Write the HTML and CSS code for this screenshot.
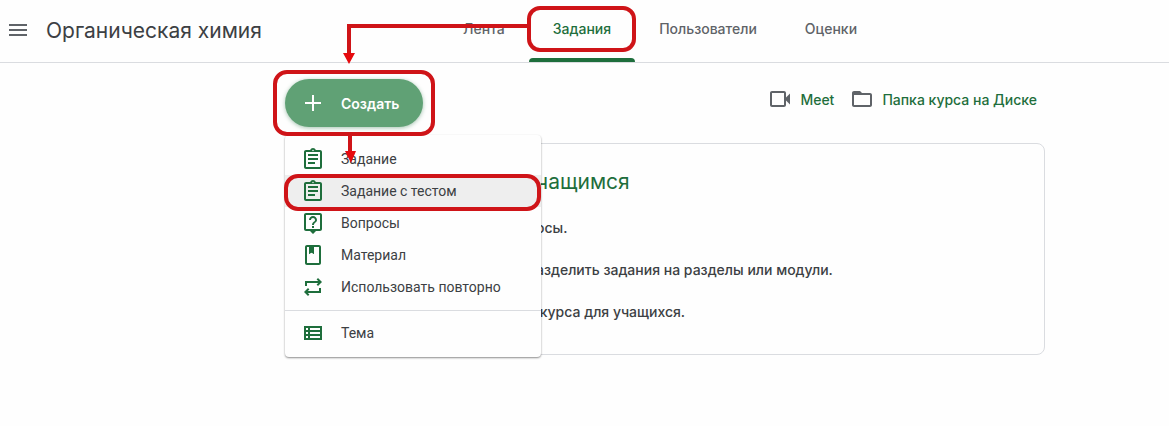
FILE: index.html
```html
<!DOCTYPE html>
<html lang="ru">
<head>
    <meta charset="UTF-8">
    <meta name="viewport" content="width=device-width, initial-scale=1.0">
    <title>Органическая химия</title>
    <link rel="stylesheet" href="styles.css">
</head>
<body>
    <header class="header">
        <div class="brand">
            <button class="burger" type="button" aria-label="Меню">
                <svg class="icon" viewBox="0 0 24 24"><path d="M3 18h18v-2H3v2zm0-5h18v-2H3v2zm0-7v2h18V6H3z"/></svg>
            </button>
            <h1 class="title">Органическая химия</h1>
        </div>
        <nav class="tabs">
            <a class="tab" href="#">Лента</a>
            <a class="tab active" href="#">Задания</a>
            <a class="tab" href="#">Пользователи</a>
            <a class="tab" href="#">Оценки</a>
        </nav>
    </header>

    <main class="content">
        <div class="toolbar">
            <div class="create">
                <button class="create-button" type="button">
                    <svg class="icon" viewBox="0 0 24 24"><path d="M20 13h-7v7h-2v-7H4v-2h7V4h2v7h7v2z"/></svg>
                    Создать
                </button>
                <div class="menu">
                    <button class="menu-item" type="button">
                        <svg class="icon" viewBox="0 0 24 24"><path d="M7 15h7v2H7zm0-4h10v2H7zm0-4h10v2H7zm12-4h-4.180C14.400 1.840 13.300 1 12 1s-2.400.84-2.820 2H5c-1.100 0-2 .9-2 2v15c0 1.100.9 2 2 2h14c1.100 0 2-.9 2-2V5c0-1.100-.9-2-2-2zm-7-.25c.41 0 .75.34.75.75s-.34.75-.75.75-.75-.34-.75-.75.34-.75.75-.75zM19 20H5V5h14v15z"/></svg>
                        Задание
                    </button>
                    <button class="menu-item selected" type="button">
                        <svg class="icon" viewBox="0 0 24 24"><path d="M7 15h7v2H7zm0-4h10v2H7zm0-4h10v2H7zm12-4h-4.180C14.400 1.840 13.300 1 12 1s-2.400.84-2.820 2H5c-1.100 0-2 .9-2 2v15c0 1.100.9 2 2 2h14c1.100 0 2-.9 2-2V5c0-1.100-.9-2-2-2zm-7-.25c.41 0 .75.34.75.75s-.34.75-.75.75-.75-.34-.75-.75.34-.75.75-.75zM19 20H5V5h14v15z"/></svg>
                        Задание с тестом
                    </button>
                    <button class="menu-item" type="button">
                        <svg class="icon" viewBox="0 0 24 24"><path d="M19 2H5c-1.100 0-2 .9-2 2v14c0 1.100.9 2 2 2h4l3 3 3-3h4c1.100 0 2-.9 2-2V4c0-1.100-.9-2-2-2zm0 16H5V4h14v14zm-8-3h2v2h-2zm1-8c1.100 0 2 .9 2 2 0 2-3 1.750-3 5h2c0-2.250 3-2.500 3-5 0-2.210-1.790-4-4-4S8 6.790 8 9h2c0-1.100.9-2 2-2z"/></svg>
                        Вопросы
                    </button>
                    <button class="menu-item" type="button">
                        <svg class="icon" viewBox="0 0 24 24"><path d="M18 2H6c-1.100 0-2 .9-2 2v16c0 1.100.9 2 2 2h12c1.100 0 2-.9 2-2V4c0-1.100-.9-2-2-2zm0 18H6V4h2v7l2.500-1.500L13 11V4h5v16z"/><path d="M8 4h5v7l-2.500-1.500L8 11z"/></svg>
                        Материал
                    </button>
                    <button class="menu-item" type="button">
                        <svg class="icon" viewBox="0 0 24 24"><path d="M6 8h11.200l-1.600 1.600L17 11l4-4-4-4-1.400 1.400L17.200 6H4v5h2zm12 8H6.800l1.600-1.600L7 13l-4 4 4 4 1.400-1.400L6.800 18H20v-5h-2z"/></svg>
                        Использовать повторно
                    </button>
                    <hr class="divider">
                    <button class="menu-item" type="button">
                        <svg class="icon" viewBox="0 0 24 24"><path d="M3 5v14h18V5H3zm4 2v2H5V7h2zm-2 6v-2h2v2H5zm0 2h2v2H5v-2zm14 2H9v-2h10v2zm0-4H9v-2h10v2zm0-4H9V7h10v2z"/></svg>
                        Тема
                    </button>
                </div>
            </div>
            <div class="links">
                <a class="link" href="#">
                    <svg class="icon" viewBox="0 0 24 24"><path fill-rule="evenodd" d="M4 4h12c1.100 0 2 .9 2 2v4.500l4-4v11l-4-4V18c0 1.100-.9 2-2 2H4c-1.100 0-2-.9-2-2V6c0-1.100.9-2 2-2zm0 2v12h12V6H4z"/></svg>
                    Meet
                </a>
                <a class="link" href="#">
                    <svg class="icon" viewBox="0 0 24 24"><path d="M20 6h-8l-2-2H4c-1.100 0-2 .9-2 2v12c0 1.100.9 2 2 2h16c1.100 0 2-.9 2-2V8c0-1.100-.9-2-2-2zm0 12H4V8h16v10z"/></svg>
                    Папка курса на Диске
                </a>
            </div>
        </div>

        <section class="card">
            <h2 class="card-title">чащимся</h2>
            <ul class="tips">
                <li>осы.</li>
                <li>азделить задания на разделы или модули.</li>
                <li>&nbsp;курса для учащихся.</li>
            </ul>
        </section>
    </main>

    <!-- красные рамки и стрелки поверх страницы -->
    <svg class="marks" width="640" height="220" aria-hidden="true">
        <g class="mark-lines">
            <rect x="529" y="8" width="105" height="42" rx="11"/>
            <rect x="275" y="72" width="158" height="62" rx="12"/>
            <rect x="286" y="176" width="253" height="33" rx="12"/>
            <path d="M529 26H349V54M350 135v18"/>
        </g>
        <path class="mark-heads" d="M343 53h12l-6 11zM345 151h11l-5 12z"/>
    </svg>
</body>
</html>
```
FILE: styles.css
```css
* {
    box-sizing: border-box;
}
body {
    margin: 0;
    background-color: #fefefe;
    color: #3c4043;
    font-family: Inter, "Open Sans", sans-serif;
    font-size: 14px;
}
button {
    border: none;
    background: none;
    cursor: pointer;
}
a {
    text-decoration: none;
}
.icon {
    width: 24px;
    height: 24px;
    flex: none;
    fill: currentColor;
}
.header {
    display: grid;
    grid-template-columns: 439px 1fr;
    height: 63px;
    border-bottom: 1px solid #dadce0;
}
.brand {
    display: flex;
    align-items: center;
    gap: 16px;
    padding: 0 0 2px 6px;
}
.burger {
    display: flex;
    padding: 0;
    color: #5f6368;
}
.title {
    margin: 0;
    font-size: 21px;
    font-weight: 400;
}
.tabs {
    display: flex;
}
.tab {
    display: flex;
    align-items: center;
    padding: 0 24px 2px;
    border-bottom: 4px solid transparent;
    color: #5f6368;
    font-weight: 500;
}
.tab.active {
    position: relative;
    color: #1e6e3c;
}
.tab.active::after {
    content: "";
    position: absolute;
    left: 0;
    right: 0;
    bottom: -4px;
    height: 4px;
    border-radius: 4px 4px 0 0;
    background-color: #1e6e3c;
}
.content {
    padding: 16px 124px 16px 285px;
}
.toolbar {
    display: flex;
    justify-content: space-between;
    margin-bottom: 16px;
}
.create {
    position: relative;
}
.create-button {
    display: flex;
    align-items: center;
    gap: 16px;
    height: 48px;
    padding: 0 24px 0 16px;
    border-radius: 24px;
    background-color: #60a175;
    box-shadow: 0 1px 4px rgba(30, 110, 60, 0.4);
    color: #fff;
    font-family: inherit;
    font-size: 14px;
    font-weight: 600;
}
.menu {
    position: absolute;
    top: 56px;
    left: 0;
    width: 256px;
    padding: 8px 0;
    border-radius: 4px;
    background-color: #fefefe;
    box-shadow: 0 1px 2px rgba(0, 0, 0, 0.45);
}
.menu-item {
    display: flex;
    align-items: center;
    gap: 16px;
    width: 100%;
    height: 32px;
    padding: 0 16px;
    color: #3c4043;
    font-family: Roboto, sans-serif;
    font-size: 14px;
}
.menu-item .icon {
    color: #1e6e3c;
}
.menu-item.selected {
    background-color: #eee;
}
.divider {
    margin: 7px 0 6px;
    border: none;
    border-top: 1px solid #dadce0;
}
.links {
    display: flex;
    gap: 16px;
    height: 40px;
    padding-right: 8px;
}
.link {
    display: flex;
    align-items: center;
    gap: 8px;
    color: #1e6e3c;
    font-weight: 500;
}
.link .icon {
    color: #5f6368;
}
.card {
    padding: 24px 24px 32px 250px;
    border: 1px solid #dadce0;
    border-radius: 8px;
}
.card-title {
    margin: 0 0 22px;
    color: #1e6e3c;
    font-size: 21px;
    font-weight: 400;
    line-height: 28px;
}
.tips {
    display: grid;
    gap: 22px;
    margin: 0;
    padding: 0;
    list-style: none;
    font-weight: 500;
    line-height: 20px;
}
.marks {
    position: absolute;
    top: 0;
    left: 0;
    pointer-events: none;
}
.mark-lines {
    fill: none;
    stroke: #cf1418;
    stroke-width: 4;
}
.mark-heads {
    fill: #e60a0e;
}
```
